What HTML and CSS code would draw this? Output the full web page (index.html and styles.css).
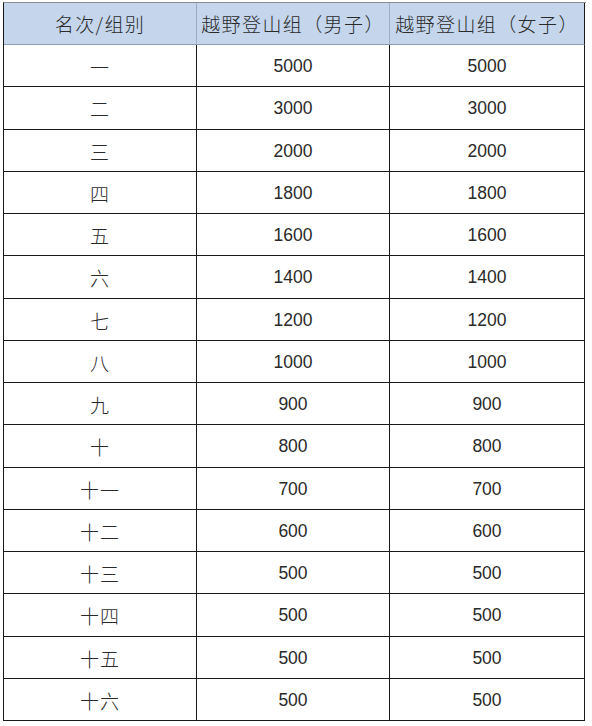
FILE: index.html
```html
<!DOCTYPE html>
<html lang="zh-CN">
<head>
<meta charset="utf-8">
<title>奖金表</title>
<link rel="stylesheet" href="styles.css">
</head>
<body>
<div class="sheet" role="table">
  <div class="cell head">名次/组别</div>
  <div class="cell head">越野登山组（男子）</div>
  <div class="cell head last">越野登山组（女子）</div>

  <div class="cell cn">一</div><div class="cell num">5000</div><div class="cell num last">5000</div>
  <div class="cell cn">二</div><div class="cell num">3000</div><div class="cell num last">3000</div>
  <div class="cell cn">三</div><div class="cell num">2000</div><div class="cell num last">2000</div>
  <div class="cell cn">四</div><div class="cell num">1800</div><div class="cell num last">1800</div>
  <div class="cell cn">五</div><div class="cell num">1600</div><div class="cell num last">1600</div>
  <div class="cell cn">六</div><div class="cell num">1400</div><div class="cell num last">1400</div>
  <div class="cell cn">七</div><div class="cell num">1200</div><div class="cell num last">1200</div>
  <div class="cell cn">八</div><div class="cell num">1000</div><div class="cell num last">1000</div>
  <div class="cell cn">九</div><div class="cell num">900</div><div class="cell num last">900</div>
  <div class="cell cn">十</div><div class="cell num">800</div><div class="cell num last">800</div>
  <div class="cell cn">十一</div><div class="cell num">700</div><div class="cell num last">700</div>
  <div class="cell cn">十二</div><div class="cell num">600</div><div class="cell num last">600</div>
  <div class="cell cn">十三</div><div class="cell num">500</div><div class="cell num last">500</div>
  <div class="cell cn">十四</div><div class="cell num">500</div><div class="cell num last">500</div>
  <div class="cell cn">十五</div><div class="cell num">500</div><div class="cell num last">500</div>
  <div class="cell cn">十六</div><div class="cell num">500</div><div class="cell num last">500</div>
</div>
</body>
</html>
```

FILE: styles.css
```css
html, body {
  margin: 0;
  padding: 0;
  background: #ffffff;
}

.sheet {
  margin: 2px 0 0 3px;
  width: 582px;
  display: grid;
  grid-template-columns: 193px 193px 195px;
  border-left: 1px solid #1a1a1a;
  border-top: 1px solid #8c8c8c;
  color: #2a2a2a;
}

.cell {
  box-sizing: border-box;
  height: 42.25px;
  border-right: 1px solid #1a1a1a;
  border-bottom: 1px solid #1a1a1a;
  display: flex;
  align-items: center;
  justify-content: center;
  padding-top: 2px;
}

.head {
  height: 42px;
  background: #c5d6ec;
  border-right-color: #9aaec8;
  border-bottom-color: #8e9fb5;
  font-family: "Noto Sans CJK SC", sans-serif;
  font-weight: 300;
  font-size: 19px;
  letter-spacing: 1.4px;
  padding-top: 0;
}

.head.last {
  border-right-color: #1a1a1a;
}

.cn {
  font-family: "Noto Sans CJK SC", sans-serif;
  font-weight: 300;
  font-size: 19px;
  letter-spacing: 1px;
}

.num {
  font-family: "Liberation Sans", Arial, sans-serif;
  font-size: 17.5px;
}
```
